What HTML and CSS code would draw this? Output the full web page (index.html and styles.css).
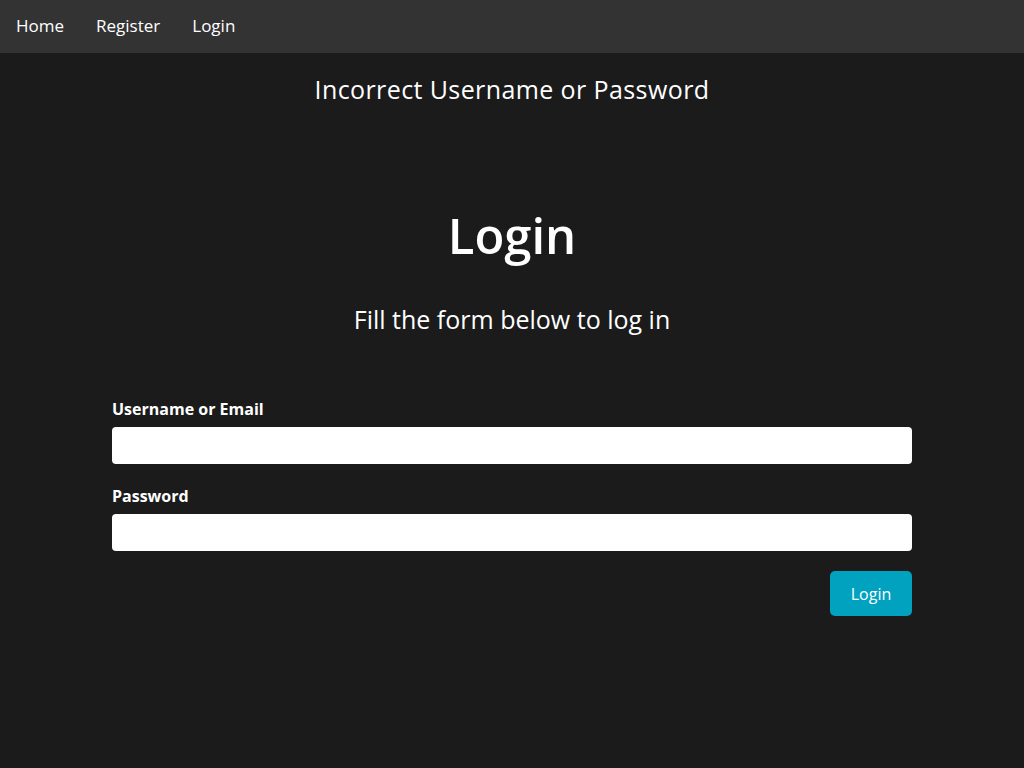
FILE: index.html
```html
<!DOCTYPE html>
<html lang="en">
<head>
<meta charset="utf-8">
<title>Login</title>
<link rel="stylesheet" href="styles.css">
</head>
<body>
<nav class="topnav">
  <a class="nav-link" href="#">Home</a>
  <a class="nav-link" href="#">Register</a>
  <a class="nav-link" href="#">Login</a>
</nav>
<main class="page">
  <p class="alert">Incorrect Username or Password</p>
  <h1 class="title">Login</h1>
  <p class="subtitle">Fill the form below to log in</p>
  <form class="form">
    <label class="label" for="user">Username or Email</label>
    <input class="input" id="user" type="text">
    <label class="label" for="pass">Password</label>
    <input class="input" id="pass" type="password">
    <div class="actions">
      <button class="btn" type="button">Login</button>
    </div>
  </form>
</main>
</body>
</html>
```

FILE: styles.css
```css
* { box-sizing: border-box; }
html, body {
  margin: 0;
  padding: 0;
  background: #1b1b1b;
  color: #ffffff;
  font-family: "Open Sans", "DejaVu Sans", sans-serif;
}
.topnav {
  display: flex;
  align-items: flex-start;
  height: 53px;
  background: #333333;
}
.nav-link {
  color: #ffffff;
  text-decoration: none;
  font-size: 17px;
  padding: 0 16px;
  line-height: 52px;
}
.page {
  display: flex;
  flex-direction: column;
  align-items: center;
}
.alert {
  margin: 21px 0 0;
  font-size: 25px;
  letter-spacing: 0.4px;
  line-height: 30px;
}
.title {
  margin: 99px 0 0;
  font-size: 49px;
  font-weight: 600;
  line-height: 64px;
}
.subtitle {
  margin: 37px 0 0;
  font-size: 25px;
  line-height: 30px;
}
.form {
  width: 800px;
  margin-top: 63px;
  display: flex;
  flex-direction: column;
}
.label {
  font-size: 16px;
  font-weight: 700;
  line-height: 24px;
  margin-bottom: 6px;
}
.input {
  height: 37px;
  border: none;
  border-radius: 4px;
  background: #ffffff;
  margin-bottom: 20px;
  font-size: 16px;
  padding: 0 10px;
}
.actions {
  display: flex;
  justify-content: flex-end;
}
.btn {
  background: #00a2bf;
  color: #ffffff;
  border: none;
  border-radius: 5px;
  height: 45px;
  width: 82px;
  font-family: inherit;
  font-size: 16px;
  cursor: pointer;
}
```
